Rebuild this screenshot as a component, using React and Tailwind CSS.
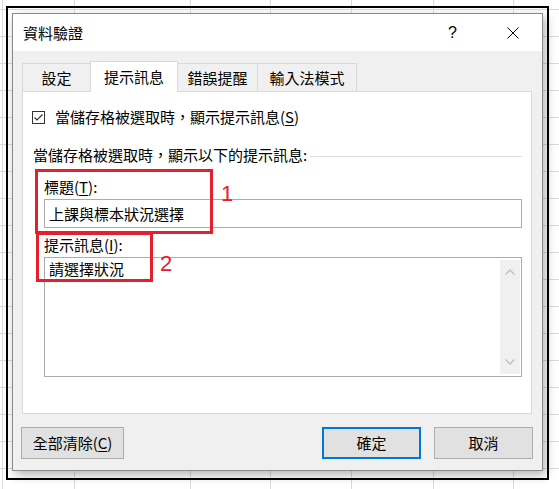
import React from "react";

function GridBg() {
  const vx = [2, 74, 190, 270, 351, 433, 513];
  const hy = [];
  for (let k = 0; k < 19; k++) hy.push(9 + 27 * k);
  return (
    <svg className="absolute inset-0" width="559" height="489">
      {vx.map((x) => (
        <line key={"v" + x} x1={x + 0.5} y1="0" x2={x + 0.5} y2="489" stroke="#dadada" strokeWidth="1" />
      ))}
      {hy.map((y) => (
        <line key={"h" + y} x1="0" y1={y + 0.5} x2="559" y2={y + 0.5} stroke="#dadada" strokeWidth="1" />
      ))}
    </svg>
  );
}

function Tab({ w, children, cls }) {
  return (
    <div className={"flex items-center justify-center text-[15px] leading-[20px] " + w + " " + cls}>
      {children}
    </div>
  );
}

export default function App() {
  return (
    <div className="relative w-[559px] h-[489px] overflow-hidden bg-white text-black font-['Noto_Sans_CJK_TC',sans-serif]">
      <GridBg />
      <div className="relative pl-[6px] pt-[6px]">
        <div className="w-[543px] h-[474px] border-2 border-black pl-[4px] pt-[5px]">
          <div className="w-[531px] h-[458px] border border-[#8a8a8a] bg-[#f0f0f0] shadow-[3px_4px_10px_rgba(0,0,0,0.3)] flex flex-col">
            {/* title bar */}
            <div className="h-[37px] bg-white flex items-center pl-[10px] pr-[23px]">
              <div className="flex-1 text-[15px] leading-[20px]">資料驗證</div>
              <div className="text-[16px] leading-[20px] font-['Liberation_Sans',sans-serif] mr-[50px]">?</div>
              <svg width="12" height="12" viewBox="0 0 12 12">
                <line x1="0.5" y1="0.5" x2="11.5" y2="11.5" stroke="#000" strokeWidth="1" />
                <line x1="11.5" y1="0.5" x2="0.5" y2="11.5" stroke="#000" strokeWidth="1" />
              </svg>
            </div>
            {/* body */}
            <div className="flex-1 flex flex-col pt-[10px]">
              <div className="flex items-end h-[30px] pl-[9px]">
                <Tab w="w-[68px] h-[28px]" cls="border-l border-t border-[#d9d9d9]">設定</Tab>
                <Tab w="w-[88px] h-[31px] -mb-px" cls="relative z-10 bg-white border-l border-t border-r border-[#d9d9d9] pb-[1px]">提示訊息</Tab>
                <Tab w="w-[80px] h-[28px]" cls="border-t border-r border-[#d9d9d9]">錯誤提醒</Tab>
                <Tab w="w-[99px] h-[28px]" cls="border-t border-r border-[#d9d9d9]">輸入法模式</Tab>
              </div>
              <div className="ml-[9px] w-[510px] h-[323px] bg-white border border-[#d9d9d9] flex flex-col text-[15px] leading-[20px]">
                {/* checkbox row */}
                <div className="mt-[15px] h-[20px] flex items-center pl-[9px]">
                  <div className="w-[13px] h-[13px] border border-[#333] bg-white flex items-center justify-center">
                    <svg width="11" height="11" viewBox="0 0 11 11">
                      <polyline points="1.5,5.5 4,8 9.5,2.5" fill="none" stroke="#333" strokeWidth="1.2" />
                    </svg>
                  </div>
                  <div className="ml-[10px]">
                    當儲存格被選取時，顯示提示訊息(<span className="underline underline-offset-2">S</span>)
                  </div>
                </div>
                {/* group label */}
                <div className="mt-[18px] h-[20px] flex items-center pl-[10px] pr-[9px]">
                  <div>當儲存格被選取時，顯示以下的提示訊息:</div>
                  <div className="flex-1 h-px bg-[#dcdcdc] ml-[3px] mt-[3px]" />
                </div>
                {/* title label */}
                <div className="mt-[12px] h-[20px] flex items-center pl-[21px]">
                  標題(<span className="underline underline-offset-2">T</span>):
                </div>
                <div className="mt-[2px] ml-[21px] w-[478px] h-[29px] border border-[#ababab] bg-white flex items-center pl-[4px]">
                  上課與標本狀況選擇
                </div>
                {/* message label */}
                <div className="mt-[7px] h-[20px] flex items-center pl-[21px]">
                  提示訊息(<span className="underline underline-offset-2">I</span>):
                </div>
                <div className="mt-[2px] ml-[21px] w-[478px] h-[120px] border border-[#ababab] bg-white flex">
                  <div className="flex-1 pl-[4px] pt-[1px]">請選擇狀況</div>
                  <div className="w-[20px] my-[2px] mr-[1px] bg-[#f0f0f0] flex flex-col items-center justify-between py-[9px]">
                    <svg width="10" height="6" viewBox="0 0 10 6">
                      <polyline points="0.5,5.5 5,1 9.5,5.5" fill="none" stroke="#c2c2c2" strokeWidth="1.5" />
                    </svg>
                    <svg width="10" height="6" viewBox="0 0 10 6">
                      <polyline points="0.5,0.5 5,5 9.5,0.5" fill="none" stroke="#c2c2c2" strokeWidth="1.5" />
                    </svg>
                  </div>
                </div>
              </div>
              {/* buttons */}
              <div className="mt-[13px] flex pl-[8px] pr-[9px] text-[15px] leading-[20px]">
                <div className="w-[103px] h-[32px] bg-[#e1e1e1] border border-[#adadad] flex items-center justify-center">
                  全部清除(<span className="underline underline-offset-2">C</span>)
                </div>
                <div className="flex-1" />
                <div className="w-[99px] h-[32px] bg-[#e1e1e1] border-2 border-[#0078d7] flex items-center justify-center">
                  確定
                </div>
                <div className="ml-[13px] w-[99px] h-[32px] bg-[#e1e1e1] border border-[#adadad] flex items-center justify-center">
                  取消
                </div>
              </div>
            </div>
          </div>
        </div>
      </div>
      {/* annotations */}
      <div className="absolute left-[35px] top-[169px] w-[178px] h-[65px] border-[3px] border-[#e3202b]" />
      <div className="absolute left-[36px] top-[232px] w-[117px] h-[50px] border-[3px] border-[#e3202b]" />
      <div className="absolute left-[221px] top-[181px] text-[22px] leading-[26px] text-[#e3202b] font-['Liberation_Sans',sans-serif]">1</div>
      <div className="absolute left-[160px] top-[251px] text-[22px] leading-[26px] text-[#e3202b] font-['Liberation_Sans',sans-serif]">2</div>
    </div>
  );
}
